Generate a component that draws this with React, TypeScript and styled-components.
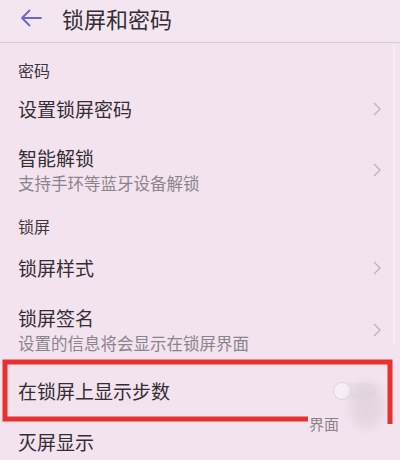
import React from "react";
import styled, { createGlobalStyle } from "styled-components";

const Global = createGlobalStyle`
  html, body { margin: 0; padding: 0; background: #f3e3ef; }
  body { font-family: "Noto Sans CJK SC", "Noto Sans", sans-serif; }
`;

const Page = styled.div`
  position: relative;
  width: 400px;
  height: 460px;
  overflow: hidden;
  background: #f3e3ef;
  color: #363036;
`;

const Header = styled.div`
  height: 42px;
  display: flex;
  align-items: center;
  gap: 20px;
  padding-left: 20px;
  border-bottom: 1px solid #d8cdd6;
  background: #f3e6f0;
`;

const Title = styled.div`
  font-size: 22px;
  line-height: 26px;
  color: #342e34;
  margin-top: -6px;
`;

const BackIcon = styled.svg`
  width: 22px;
  height: 22px;
  margin-top: -6px;
`;

const SectionHeader = styled.div<{ $top: number; $bottom: number }>`
  padding: ${(p) => p.$top}px 18px ${(p) => p.$bottom}px;
  font-size: 16px;
  line-height: 22px;
  color: #3c363c;
`;

const Row = styled.div<{ $h?: number; $pt?: number; $pb?: number }>`
  position: relative;
  display: flex;
  align-items: center;
  justify-content: space-between;
  padding: ${(p) => p.$pt ?? 0}px 18px ${(p) => p.$pb ?? 0}px;
  ${(p) => (p.$h ? `height: ${p.$h}px;` : "")}
  box-sizing: border-box;
`;

const Texts = styled.div`
  display: flex;
  flex-direction: column;
  gap: 2px;
`;

const RowTitle = styled.div`
  font-size: 19px;
  line-height: 24px;
  color: #342e34;
`;

const RowSub = styled.div`
  font-size: 16.5px;
  line-height: 22px;
  color: #8c848c;
`;

const Chevron = styled.svg`
  width: 8px;
  height: 14px;
  margin-right: 1px;
`;

const Switch = styled.div`
  width: 42px;
  height: 16px;
  border-radius: 8px;
  background: #ebdee8;
  position: relative;
  margin-right: 6px;
  &::before {
    content: "";
    position: absolute;
    left: 0;
    top: 0;
    width: 16px;
    height: 16px;
    border-radius: 50%;
    background: #f6eef4;
    box-shadow: 0 0 0 1px #e0d0dc;
  }
`;

const Blob = styled.div`
  position: absolute;
  right: 16px;
  top: 382px;
  width: 34px;
  height: 46px;
  border-radius: 45%;
  background: #dccdd8;
  filter: blur(5px);
  opacity: 0.6;
`;

const Annotation = styled.svg`
  position: absolute;
  left: 0;
  top: 0;
  width: 400px;
  height: 460px;
  pointer-events: none;
`;

const GhostText = styled.div`
  position: absolute;
  left: 309px;
  top: 413px;
  font-size: 15px;
  line-height: 22px;
  color: #8a828a;
`;

const EdgeStrip = styled.div`
  position: absolute;
  right: 5px;
  top: 44px;
  width: 2px;
  height: 300px;
  background: #f8eef6;
  opacity: 0.7;
`;

const ChevronIcon = () => (
  <Chevron viewBox="0 0 8 14">
    <path d="M1 1 L7 7 L1 13" fill="none" stroke="#bcb2ba" strokeWidth="1.3" />
  </Chevron>
);

export default function App() {
  return (
    <Page>
      <Global />
      <Header>
        <BackIcon viewBox="0 0 22 22">
          <path d="M2 11 H21 M9.5 3.5 L2 11 L9.5 18.5" fill="none" stroke="#6b66cf" strokeWidth="1.8" strokeLinecap="round" strokeLinejoin="round" />
        </BackIcon>
        <Title>锁屏和密码</Title>
      </Header>

      <SectionHeader $top={16} $bottom={5}>密码</SectionHeader>

      <Row $h={46}>
        <RowTitle>设置锁屏密码</RowTitle>
        <ChevronIcon />
      </Row>

      <Row $pt={14} $pb={10}>
        <Texts>
          <RowTitle>智能解锁</RowTitle>
          <RowSub>支持手环等蓝牙设备解锁</RowSub>
        </Texts>
        <ChevronIcon />
      </Row>

      <SectionHeader $top={11} $bottom={6}>锁屏</SectionHeader>

      <Row $h={50}>
        <RowTitle>锁屏样式</RowTitle>
        <ChevronIcon />
      </Row>

      <Row $pt={13} $pb={12}>
        <Texts>
          <RowTitle>锁屏签名</RowTitle>
          <RowSub>设置的信息将会显示在锁屏界面</RowSub>
        </Texts>
        <ChevronIcon />
      </Row>

      <Row $h={50}>
        <RowTitle>在锁屏上显示步数</RowTitle>
        <Switch />
      </Row>

      <Row $h={52}>
        <RowTitle>灭屏显示</RowTitle>
      </Row>

      <EdgeStrip />
      <Blob />
      <GhostText>界面</GhostText>
      <Annotation viewBox="0 0 400 460">
        <path
          d="M308 419 H5 V362 H390 V424"
          fill="none"
          stroke="#e8302f"
          strokeWidth="5"
          strokeLinejoin="miter"
        />
      </Annotation>
    </Page>
  );
}
